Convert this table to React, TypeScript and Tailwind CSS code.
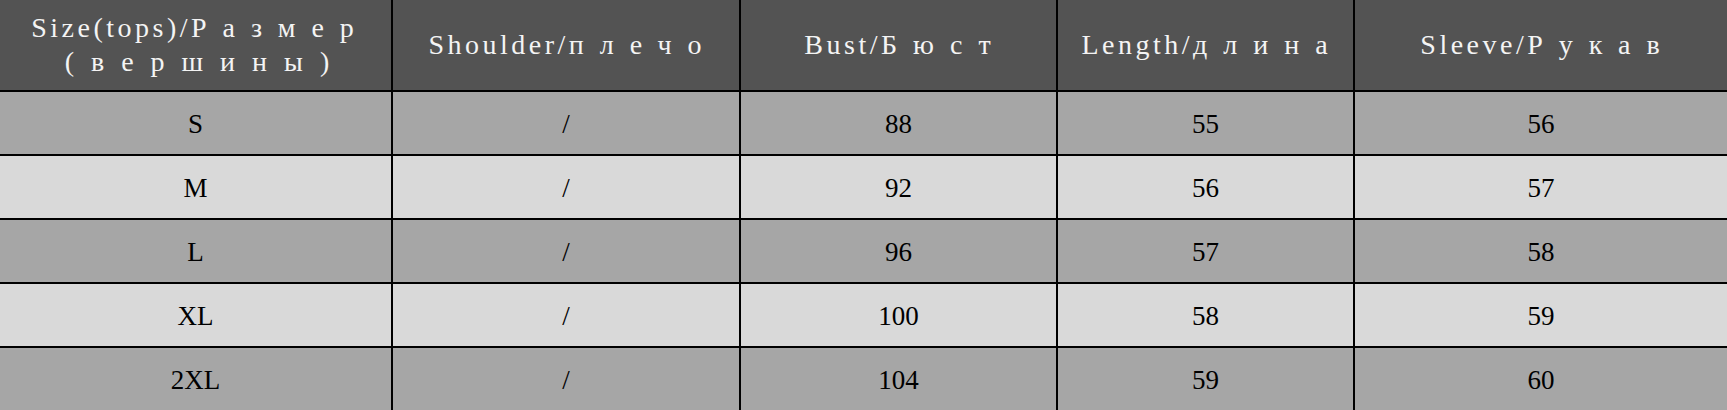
const cols = ['w-[393px]', 'w-[348px]', 'w-[317px]', 'w-[297px]', 'w-[372px]'];

const rows = [
  ['S', '/', '88', '55', '56'],
  ['M', '/', '92', '56', '57'],
  ['L', '/', '96', '57', '58'],
  ['XL', '/', '100', '58', '59'],
  ['2XL', '/', '104', '59', '60'],
];

function Head({ lat, cyr }: { lat: string; cyr: string }) {
  return (
    <span className="whitespace-nowrap">
      <span className="tracking-[3.5px]">{lat}</span>
      <span className="tracking-[16px]">{cyr}</span>
    </span>
  );
}

export default function App() {
  return (
    <div className="w-[1727px] h-[410px] overflow-hidden bg-[#a6a6a6] font-['Liberation_Serif','Times_New_Roman',serif]">
      {/* Header */}
      <div className="flex h-[92px] bg-[#535353] text-[#f4f4f4] text-[28px] border-b-2 border-black">
        <div className={`${cols[0]} shrink-0 border-r-2 border-black flex flex-col items-center justify-center leading-[34px] pl-[10px]`}>
          <Head lat="Size(tops)/" cyr="Размер" />
          <span className="tracking-[17px] pl-[10px]">(вершины)</span>
        </div>
        <div className={`${cols[1]} shrink-0 border-r-2 border-black flex items-center justify-center pl-[14px]`}>
          <Head lat="Shoulder/" cyr="плечо" />
        </div>
        <div className={`${cols[2]} shrink-0 border-r-2 border-black flex items-center justify-center pl-[14px]`}>
          <Head lat="Bust/" cyr="Бюст" />
        </div>
        <div className={`${cols[3]} shrink-0 border-r-2 border-black flex items-center justify-center pl-[14px]`}>
          <Head lat="Length/" cyr="длина" />
        </div>
        <div className={`${cols[4]} shrink-0 flex items-center justify-center pl-[14px]`}>
          <Head lat="Sleeve/" cyr="Рукав" />
        </div>
      </div>

      {/* Body */}
      {rows.map((r, i) => (
        <div
          key={i}
          className={`flex h-[64px] text-[27px] text-black border-b-2 border-black ${i % 2 === 0 ? 'bg-[#a6a6a6]' : 'bg-[#d9d9d9]'}`}
        >
          {r.map((v, j) => (
            <div
              key={j}
              className={`${cols[j]} shrink-0 flex items-center justify-center pt-[3px] ${j < 4 ? 'border-r-2 border-black' : ''}`}
            >
              {v}
            </div>
          ))}
        </div>
      ))}
    </div>
  );
}
